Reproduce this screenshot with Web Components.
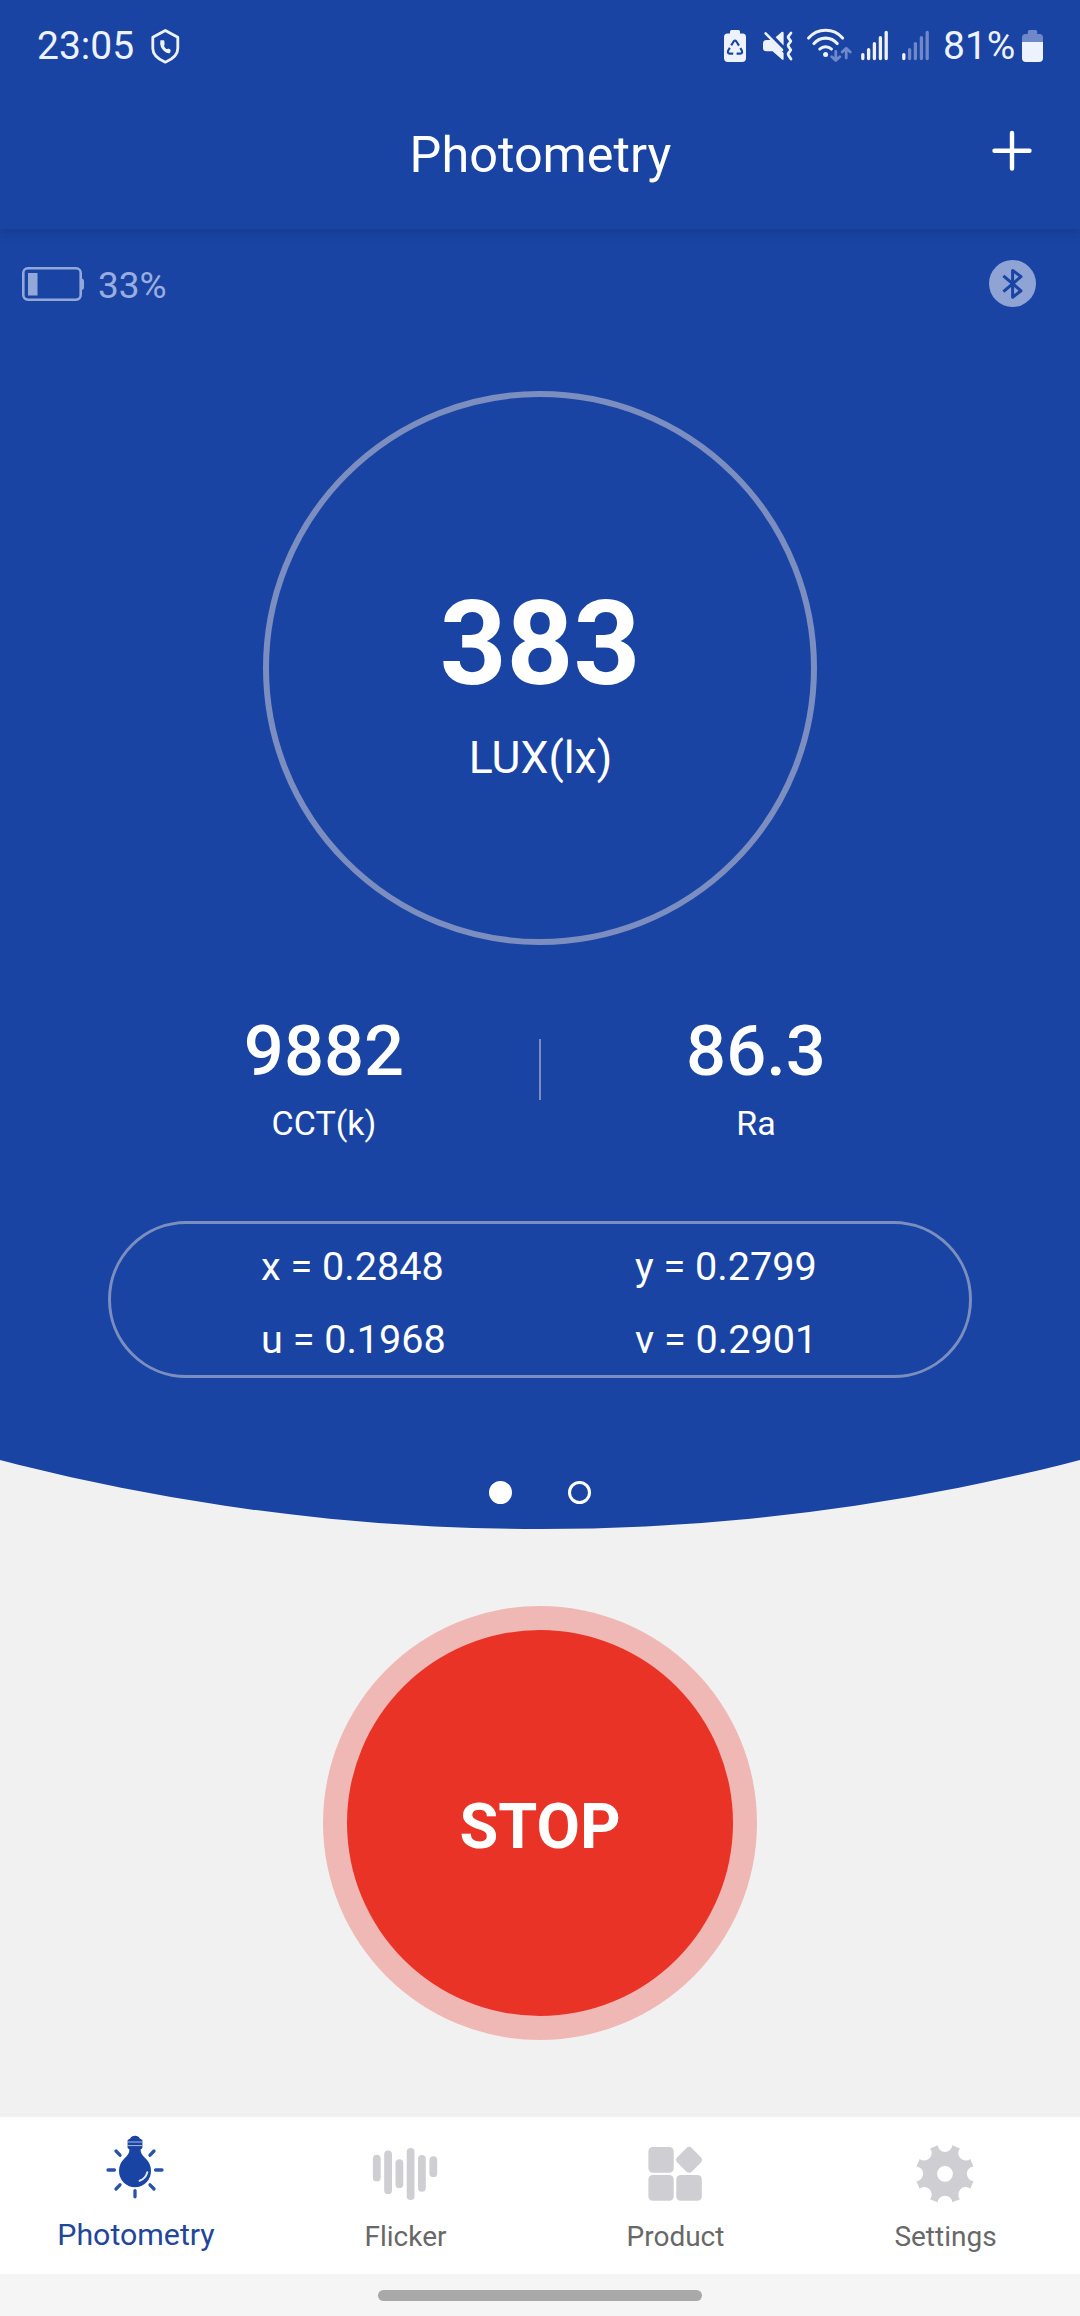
<!DOCTYPE html>
<html lang="en">
<head>
<meta charset="utf-8">
<title>Photometry</title>
<style>
	:root {
		--blue: #1a44a3;
		--status: #eef2fd;
		--status-dim: #6e88c9;
		--soft: #93a7d8;
		--line: #7c8ebf;
		--gray: #f1f1f1;
		--icon: #cfced3;
	}

	html, body {
		margin: 0;
		padding: 0;
		background: var(--gray);
		font-family: Roboto, "Liberation Sans", sans-serif;
	}
</style>
</head>
<body>
<photo-app></photo-app>

<script>
const define = (tag, html, setup) => {
	const template = document.createElement('template')
	template.innerHTML = html

	customElements.define(tag, class extends HTMLElement {
		constructor() {
			super()
			this.attachShadow({mode: 'open'})
			this.shadowRoot.appendChild(template.content.cloneNode(true))
		}

		connectedCallback() {
			if (setup) setup(this, this.shadowRoot)
		}
	})
}

define('status-bar', /*html*/`
<style>
	:host {
		display: flex;
		height: 91px;
		padding: 0 37px;
		color: var(--status);
		font-size: 39px;
		line-height: 92px;
	}

	svg {
		display: block;
		flex: none;
		fill: none;
		stroke-linecap: round;
		stroke-linejoin: round;
	}

	.space { flex: 1; }
	.solid { fill: var(--status); }
	.dim { fill: var(--status-dim); }
	.line { stroke: var(--status); }
</style>

<span>23:05</span>
<svg style="margin-left: 16px" width="30" height="91" viewBox="150 0 30 91">
	<path class="line" stroke-width="2.8" d="M165.3 30.5 L177.8 37.3 V48.5 Q177.8 57 165.3 62.2 Q152.8 57 152.8 48.5 V37.3 Z"/>
	<path class="solid" d="M160.4 40.2 H163.4 Q164.4 40.2 164.4 41.4 L164.6 44.4 Q163.8 45.4 164.2 46.6 Q165 48.4 166.6 49 Q167.6 49 168.2 48.4 L170.2 49.4 Q171 50 170.6 51 L170 53 Q168.4 53.6 166 52.4 Q161 49.4 160.2 44 Z"/>
</svg>
<div class="space"></div>

<svg width="22" height="91" viewBox="724 0 22 91">
	<path class="solid" d="M731.5 30 H738.5 Q740 30 740 31.5 V33.5 H742.5 Q746 33.5 746 37 V58 Q746 62 742 62 H728 Q724 62 724 58 V37 Q724 33.5 727.5 33.5 H730 V31.5 Q730 30 731.5 30 Z"/>
	<g stroke="#1a44a3" stroke-width="2.1" stroke-linecap="butt">
		<path d="M731.2 45.4 L733.8 41.2 Q735 39.8 736.2 41.2 L739 45.6"/>
		<path d="M740.4 48 L742 51 Q742.6 53.4 740.4 53.6 H736.6"/>
		<path d="M733.2 53.6 H729.6 Q727.4 53.4 728 51 L729.8 47.8"/>
	</g>
</svg>
<svg style="margin-left: 16px" width="31" height="91" viewBox="762 0 31 91">
	<path class="line" stroke-width="2.6" d="M765.6 33.4 L782 50"/>
	<path class="solid" d="M766.5 40 H770.8 L783.6 53 V59 Q783.4 60.6 782 59.6 L772.6 51.2 H766.5 Q763 51.2 763 48 V43.5 Q763 40 766.5 40 Z"/>
	<path class="solid" d="M775.6 37.2 L781.6 32 Q783.6 31 783.6 33 V45.4 Z"/>
	<path class="line" stroke-width="2.8" d="M791 33 L788.2 36.6 Q788 37.4 788.6 38.2 L790.8 41.2 L788.2 44.8 Q788 46 788.6 46.8 L790.8 50 L788.2 53.6 Q788 54.6 788.6 55.4 L791 59"/>
</svg>
<svg style="margin-left: 13px" width="46" height="91" viewBox="806 0 46 91">
	<g class="line" stroke-width="3.1">
		<path d="M808.6 38 A22.5 22.5 0 0 1 842.6 38"/>
		<path d="M814 43.6 A15 15 0 0 1 837.2 43.6"/>
		<path d="M819.8 49 A8.4 8.4 0 0 1 831.4 49"/>
	</g>
	<circle class="solid" cx="825.6" cy="54.4" r="2.5"/>
	<path stroke="#6e88c9" stroke-width="2.8" d="M835.8 51.5 V60.4 M831.8 56.8 L835.8 60.6 L839.8 56.8 M846.2 58 V48.4 M842.2 52 L846.2 48.2 L850.2 52"/>
</svg>
<svg style="margin-left: 9px" width="27" height="91" viewBox="861 0 27 91">
	<path class="line" stroke-width="3.3" d="M862.8 54.6 V58.6 M868.6 49.6 V58.6 M874.4 43.6 V58.6 M880.4 37.6 V58.6 M886.2 32.4 V58.6"/>
</svg>
<svg style="margin-left: 14px" width="27" height="91" viewBox="902 0 27 91">
	<path class="line" stroke-width="3.3" d="M903.8 54.6 V58.6"/>
	<path stroke="#6e88c9" stroke-width="3.3" d="M909.6 49.6 V58.6 M915.4 43.6 V58.6 M921.4 37.6 V58.6 M927.2 32.4 V58.6"/>
</svg>
<span style="margin-left: 14px">81%</span>
<svg style="margin-left: 6.6px" width="21" height="91" viewBox="1022 0 21 91">
	<path class="dim" d="M1029.5 30 H1035.5 Q1037.2 30 1037.2 31.5 V34 H1039.5 Q1043 34 1043 37.5 V42 H1022 V37.5 Q1022 34 1025.5 34 H1027.8 V31.5 Q1027.8 30 1029.5 30 Z"/>
	<path class="solid" d="M1022 42 H1043 V58 Q1043 62 1039 62 H1026 Q1022 62 1022 58 Z"/>
</svg>
`)

define('app-header', /*html*/`
<style>
	:host {
		display: grid;
		grid-template-columns: 1fr auto 1fr;
		height: 138px;
		padding: 0 48px;
		box-sizing: border-box;
		color: #fff;
		font-size: 50.4px;
		line-height: 127px;
		box-shadow: 0 1px 11px rgba(10, 30, 70, .3);
		clip-path: inset(0 0 -16px 0);
	}

	svg {
		grid-column: 3;
		justify-self: end;
		margin-top: 39px;
	}

	span {
		grid-column: 2;
		padding-left: 1px;
	}
</style>

<span><slot></slot></span>
<svg width="41" height="41" viewBox="0 0 41 41" stroke="#fff" stroke-width="4.4" stroke-linecap="round">
	<path d="M21 3 V38.5 M3.5 20.8 H38.5"/>
</svg>
`)

define('device-row', /*html*/`
<style>
	:host {
		display: flex;
		align-items: center;
		height: 109px;
		padding: 0 44px 0 22px;
		color: #9aade0;
		font-size: 37px;
	}

	span {
		flex: 1;
		margin-left: 14px;
		padding-top: 4px;
	}
</style>

<svg width="62" height="34" viewBox="0 0 62 34">
	<rect x="1.3" y="1.3" width="57.4" height="31.4" rx="4.6" fill="none" stroke="#93a7d8" stroke-width="2.6"/>
	<path fill="#93a7d8" d="M6 6 H15.5 V28.4 H6 Z M59 11.5 H60 Q62 12 62 14 V20.5 Q62 22.5 60 23 H59 Z"/>
</svg>
<span><slot></slot></span>
<svg width="47" height="47" viewBox="0 0 47 47">
	<circle cx="23.5" cy="23.5" r="23.5" fill="#8fa3d4"/>
	<path fill="none" stroke="#1a44a3" stroke-width="3" stroke-linejoin="round" d="M14.4 15.8 L32 30.8 L23.6 37.2 V10.4 L32 16.6 L14.4 31.6"/>
</svg>
`)

define('lux-dial', /*html*/`
<style>
	:host {
		display: flex;
		flex-direction: column;
		align-items: center;
		width: 554px;
		height: 554px;
		margin: 53px auto 0;
		padding-top: 187px;
		box-sizing: border-box;
		border: 6px solid var(--line);
		border-radius: 50%;
	}

	.value {
		font-size: 116.5px;
		font-weight: 700;
		line-height: 120px;
	}

	.label {
		margin-top: 24px;
		padding-left: 1px;
		font-size: 44.6px;
		line-height: 60px;
	}
</style>

<div class="value"></div>
<div class="label"><slot></slot></div>
`, (host, root) => {
	root.querySelector('.value').textContent = host.getAttribute('value')
})

define('stat-value', /*html*/`
<style>
	:host {
		display: flex;
		flex: 1;
		flex-direction: column;
		align-items: center;
		gap: 9px;
	}

	.value {
		font-size: 70.5px;
		font-weight: 500;
		line-height: 85px;
	}

	.label {
		font-size: 34px;
		line-height: 40px;
	}
</style>

<div class="value"></div>
<div class="label"><slot></slot></div>
`, (host, root) => {
	root.querySelector('.value').textContent = host.getAttribute('value')
})

define('stat-row', /*html*/`
<style>
	:host {
		display: flex;
		width: 864px;
		height: 134px;
		margin: 64px auto 0;
	}

	.rule {
		width: 2px;
		height: 61px;
		margin: 30px -1px 0;
		background: var(--line);
	}
</style>

<slot name="left"></slot>
<div class="rule"></div>
<slot name="right"></slot>
`)

define('chroma-box', /*html*/`
<style>
	:host {
		display: grid;
		grid-template-columns: 374px auto;
		width: 864px;
		height: 157px;
		margin: 78px auto 0;
		padding: 6px 0 0 150px;
		box-sizing: border-box;
		border: 3px solid var(--line);
		border-radius: 79px;
		font-size: 39.6px;
		line-height: 73px;
	}
</style>

<slot></slot>
`)

define('page-dots', /*html*/`
<style>
	:host {
		display: flex;
		justify-content: center;
		gap: 56px;
		margin-top: 103px;
	}

	i {
		width: 23px;
		height: 23px;
		box-sizing: border-box;
		border: 3px solid #fff;
		border-radius: 50%;
	}

	.on { background: #fff; }
</style>

<i class="on"></i>
<i></i>
`)

define('stop-button', /*html*/`
<style>
	:host {
		display: flex;
		flex: none;
		align-items: center;
		justify-content: center;
		width: 434px;
		height: 434px;
		margin: 77px auto 0;
		border-radius: 50%;
		background: #f0b8b5;
	}

	button {
		width: 386px;
		height: 386px;
		padding: 6px 0 0;
		border: none;
		border-radius: 50%;
		background: #ea3327;
		color: #fff;
		font: 700 63px Roboto, "Liberation Sans", sans-serif;
	}
</style>

<button><slot></slot></button>
`)

// gear outline: eight teeth separated by round bites
const gear = () => {
	const point = (deg, r) => {
		const a = deg * Math.PI / 180
		return `${ (135 + r * Math.sin(a)).toFixed(2) } ${ (56.8 - r * Math.cos(a)).toFixed(2) }`
	}
	let d = `M${ point(-14.5, 29.4) }`
	for (let k = 0; k < 8; k++) {
		d += `A7.4 7.4 0 0 0 ${ point(k * 45 + 14.5, 29.4) }`
		d += `L${ point(k * 45 + 30.5, 29.4) }`
	}
	return `<path fill-rule="evenodd" d="${ d }Z M127.1 56.8a7.9 7.9 0 1 0 15.8 0a7.9 7.9 0 1 0 -15.8 0Z"/>`
}

// drawn on the 270px width of a tab
const icons = {
	bulb: `
		<path d="M127.6 23 L130.2 21.4 Q131.4 18.8 135 18.8 Q138.6 18.8 139.8 21.4 L142.4 23 V31 L140.6 32.6 Q140.4 37 145.6 41.6 A16 16.4 0 1 1 124.4 41.6 Q129.6 37 129.4 32.6 L127.6 31 Z"/>
		<path stroke="#a9bae3" stroke-width="1" d="M127.6 25 H142.4 M127.6 28.6 H142.4"/>
		<path fill="none" stroke="#dfe6f6" stroke-width="2" stroke-linecap="round" d="M147.3 55.2 Q145.6 61.6 139.6 63.8"/>
		<path fill="none" stroke="#2b52a9" stroke-width="3.3" stroke-linecap="round" d="M108 53 H114.4 M155.6 53 H162 M135 73.6 V79.8 M116 34 L120 38.2 M154 34 L150 38.2 M120 67.8 L116 72 M150 67.8 L154 72"/>`,
	bars: `
		<path fill="none" stroke="#cfced3" stroke-width="7.8" stroke-linecap="round" d="M106.8 41.6 V60.4 M118.1 37.4 V73.2 M129.4 46.2 V67.2 M140.6 34.8 V79 M151.9 41.8 V70.8 M163.3 43.2 V56.2"/>`,
	tiles: `
		<rect x="108.4" y="30" width="25.3" height="25.7" rx="4.4"/>
		<rect x="108.4" y="58" width="25.3" height="25.8" rx="4.4"/>
		<rect x="136.3" y="58" width="25.5" height="25.8" rx="4.4"/>
		<rect x="138.9" y="32.6" width="20.4" height="20.4" rx="4" transform="rotate(45 149.1 42.8)"/>`,
	gear: gear()
}

define('tab-item', /*html*/`
<style>
	:host {
		display: flex;
		flex: 1;
		flex-direction: column;
		align-items: center;
		color: #686868;
		fill: var(--icon);
		font-size: 28px;
		line-height: 40px;
	}

	:host([active]) {
		color: #21469a;
		fill: var(--blue);
		font-size: 30.3px;
	}

	svg {
		display: block;
		margin-bottom: 3px;
	}

	span { padding-left: 1px; }

	:host([active]) svg { margin-bottom: 1px; }
	:host([active]) span { padding-left: 2px; }
</style>

<svg width="270" height="97" viewBox="0 0 270 97"></svg>
<span><slot></slot></span>
`, (host, root) => {
	root.querySelector('svg').innerHTML = icons[host.getAttribute('icon')]
})

define('tab-bar', /*html*/`
<style>
	:host {
		display: flex;
		height: 157px;
		background: #fff;
	}
</style>

<slot></slot>
`)

define('gesture-bar', /*html*/`
<style>
	:host {
		display: flex;
		justify-content: center;
		align-items: center;
		height: 42px;
		background: #f5f5f5;
	}

	div {
		width: 324px;
		height: 11px;
		border-radius: 6px;
		background: #a9a9a9;
	}
</style>

<div></div>
`)

define('photo-app', /*html*/`
<style>
	:host {
		display: flex;
		flex-direction: column;
		width: 1080px;
		height: 2316px;
		overflow: hidden;
	}

	/* the curved lower edge is part of a very large circle */
	.hero {
		flex: none;
		height: 1529px;
		background: var(--blue);
		color: #fff;
		clip-path: circle(2147px at 540px -618px);
	}

	tab-bar { margin-top: auto; }
</style>

<div class="hero">
	<status-bar></status-bar>
	<app-header>Photometry</app-header>
	<device-row>33%</device-row>
	<lux-dial value="383">LUX(lx)</lux-dial>
	<stat-row>
		<stat-value slot="left" value="9882">CCT(k)</stat-value>
		<stat-value slot="right" value="86.3">Ra</stat-value>
	</stat-row>
	<chroma-box>
		<span>x = 0.2848</span>
		<span>y = 0.2799</span>
		<span>u = 0.1968</span>
		<span>v = 0.2901</span>
	</chroma-box>
	<page-dots></page-dots>
</div>
<stop-button>STOP</stop-button>
<tab-bar>
	<tab-item icon="bulb" active>Photometry</tab-item>
	<tab-item icon="bars">Flicker</tab-item>
	<tab-item icon="tiles">Product</tab-item>
	<tab-item icon="gear">Settings</tab-item>
</tab-bar>
<gesture-bar></gesture-bar>
`)
</script>
</body>
</html>
